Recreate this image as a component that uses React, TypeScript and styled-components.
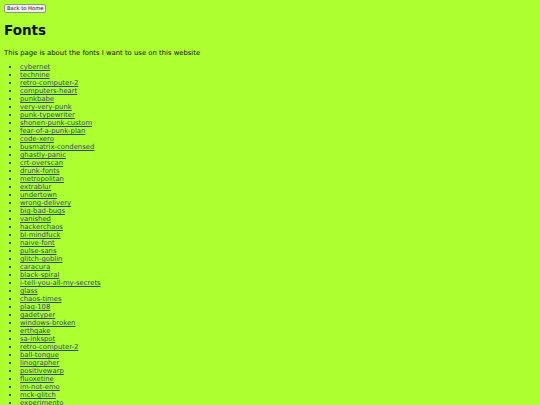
import React from "react";
import styled, { createGlobalStyle } from "styled-components";

const Global = createGlobalStyle`
  html, body { background: #adff2f; }
  body { margin: 4px; font-family: "DejaVu Sans", Verdana, sans-serif; font-size: 6.85px; color: #111; }
`;

const Page = styled.div`
  display: flex;
  flex-direction: column;
`;

const HomeButton = styled.button`
  align-self: flex-start;
  font-family: "DejaVu Sans", Verdana, sans-serif;
  font-size: 5.2px;
  padding: 0 2px;
  height: 9px;
  line-height: 7px;
  background: #efefef;
  border: 1px solid #8f8f8f;
  border-radius: 2px;
  color: #111;
`;

const Title = styled.h1`
  font-size: 13.5px;
  font-weight: bold;
  margin: 9px 0 11px;
  line-height: 16px;
`;

const Intro = styled.p`
  margin: 0 0 6px;
  line-height: 8px;
`;

const List = styled.ul`
  margin: 0;
  padding-left: 16px;
  line-height: 8px;
`;

const Item = styled.li`
  &::marker { font-size: 6px; color: #111; }
`;

const Link = styled.a`
  color: #2c4a70;
  text-decoration: underline;
`;

const fonts = [
  "cybernet", "technine", "retro-computer-2", "computers-heart", "punkbabe",
  "very-very-punk", "punk-typewriter", "shonen-punk-custom", "fear-of-a-punk-plan",
  "code-xero", "busmatrix-condensed", "ghastly-panic", "crt-overscan", "drunk-fonts",
  "metropolitan", "extrablur", "undertown", "wrong-delivery", "big-bad-bugs",
  "vanished", "hackerchaos", "bl-mindfuck", "naive-font", "pulse-sans",
  "glitch-goblin", "caracura", "black-spiral", "i-tell-you-all-my-secrets", "glass",
  "chaos-times", "plaq-108", "gadetyper", "windows-broken", "erthqake", "sa-inkspot",
  "retro-computer-2", "ball-tongue", "linographer", "positivewarp", "fluoxetine",
  "im-not-emo", "mck-glitch", "experimento",
];

export default function App() {
  return (
    <>
      <Global />
      <Page>
        <HomeButton>Back to Home</HomeButton>
        <Title>Fonts</Title>
        <Intro>This page is about the fonts I want to use on this website</Intro>
        <List>
          {fonts.map((f, i) => (
            <Item key={i}>
              <Link href={`#${f}`}>{f}</Link>
            </Item>
          ))}
        </List>
      </Page>
    </>
  );
}
